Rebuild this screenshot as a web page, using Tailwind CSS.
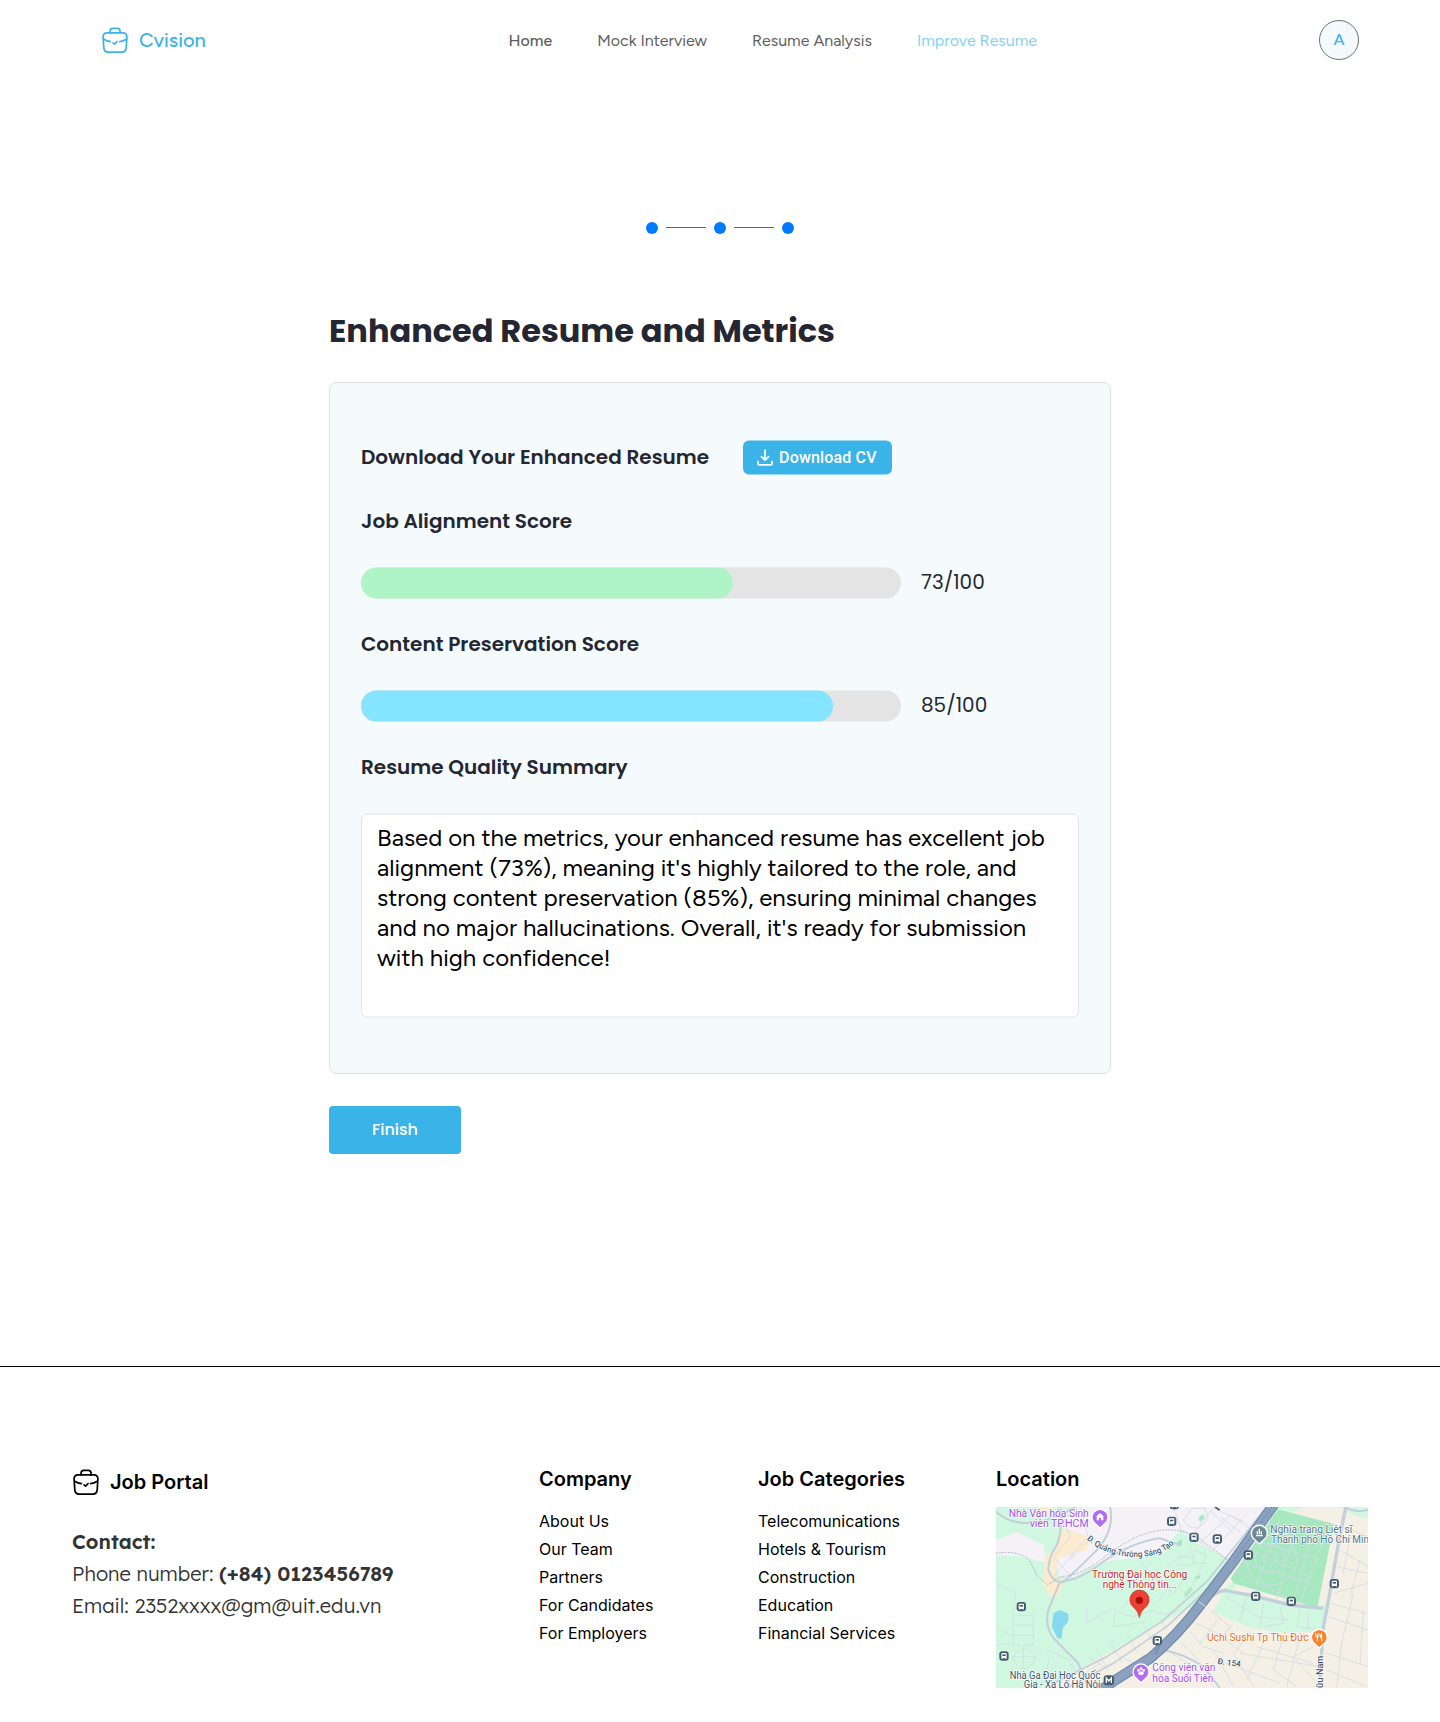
<!DOCTYPE html>
<html lang="en">
<head>
<meta charset="utf-8">
<title>Cvision - Improve Resume</title>
<script src="https://cdn.jsdelivr.net/npm/@tailwindcss/browser@4"></script>
</head>
<body class="bg-white font-['Inter',sans-serif] text-black">
<svg class="hidden">
  <symbol id="briefcase" viewBox="0 0 26 26">
    <g fill="none" stroke="currentColor" stroke-width="1.7" stroke-linecap="round" stroke-linejoin="round">
      <path d="M8 5.900V4.500C8 2.500 8.900 1.300 10.900 1.300h4.300c2 0 2.900 1.200 2.900 3.200v1.400"/>
      <path d="M5.200 5.900h15.600c2.900 0 4.300 1.700 4.100 4.400l-.7 10.300c-.2 3.100-1.300 4.600-4.500 4.600H6.300c-3.200 0-4.300-1.500-4.500-4.600L1.100 10.300C.9 7.600 2.300 5.900 5.200 5.900Z"/>
      <path d="M1.700 12.300c2.200 1.300 4.400 2.100 6.700 2.400M24.300 12.300c-2.200 1.300-4.400 2.100-6.700 2.400"/>
      <path d="m11 15.900 1.600 1.200 2.500-2.600"/>
    </g>
  </symbol>
</svg>

<header class="flex h-20 items-center pl-[102px] pr-[81px] font-['Figtree',sans-serif]">
  <a class="flex w-[406.500px] items-center gap-[11px] text-[#3ab3e8]">
    <svg class="size-[26px]"><use href="#briefcase"/></svg>
    <span class="text-xl font-medium leading-7">Cvision</span>
  </a>
  <nav class="flex gap-[45px] pt-0.5 text-base text-[#5f5f5f]">
    <a class="font-medium">Home</a>
    <a>Mock Interview</a>
    <a>Resume Analysis</a>
    <a class="text-[#84d2f3]">Improve Resume</a>
  </nav>
  <div class="ml-auto flex size-10 items-center justify-center rounded-full border border-[#6b7278] bg-[#f5fafd] text-base font-medium text-[#3ab3e8]">A</div>
</header>

<main class="mx-auto w-[782px]">
  <div class="mt-[142px] flex items-center justify-center gap-2">
    <span class="size-3 rounded-full bg-[#007bff]"></span>
    <span class="mb-px h-px w-10 bg-[#007bff]"></span>
    <span class="size-3 rounded-full bg-[#007bff]"></span>
    <span class="mb-px h-px w-10 bg-[#007bff]"></span>
    <span class="size-3 rounded-full bg-[#007bff]"></span>
  </div>

  <h1 class="mt-[73px] font-['Poppins',sans-serif] text-[32px] font-bold leading-[48px] text-[#242731]">Enhanced Resume and Metrics</h1>

  <section class="mt-[27px] rounded-lg border border-[#dfe3e6] bg-[#f5fafd] px-[31px] pb-[55px] pt-[58px] font-['Poppins',sans-serif] text-xl text-[#242731]">
    <div class="flex h-[34px] gap-[34px]">
      <h2 class="font-semibold leading-[32px]">Download Your Enhanced Resume</h2>
      <button class="flex h-[34px] w-[149px] -translate-y-[0.5px] items-center gap-1.5 rounded-md bg-[#3ab3e8] pl-3.5 font-['Roboto',sans-serif] text-base font-medium tracking-[0.01em] text-white">
        <svg class="h-[18px] w-4" viewBox="0 0 16 18" fill="none" stroke="white" stroke-width="1.7" stroke-linecap="round" stroke-linejoin="round"><path d="M8 1.500v10M4.400 8.200 8 11.700l3.600-3.500M1 12.900v2.400c0 .7.400 1.100 1.100 1.100h11.800c.7 0 1.100-.4 1.100-1.100v-2.400"/></svg>
        Download CV
      </button>
    </div>

    <h2 class="mt-[31px] font-semibold leading-[30px]">Job Alignment Score</h2>
    <div class="mt-8 flex h-[31px] items-center gap-5">
      <div class="h-[31px] w-[540px] -translate-y-[0.5px] rounded-2xl bg-[#e4e4e4]"><div class="h-full w-[372px] rounded-2xl bg-[#aff4c6]"></div></div>
      <span class="pb-1 leading-[30px]">73/100</span>
    </div>

    <h2 class="mt-[30px] font-semibold leading-[30px]">Content Preservation Score</h2>
    <div class="mt-8 flex h-[31px] items-center gap-5">
      <div class="h-[31px] w-[540px] -translate-y-[0.5px] rounded-2xl bg-[#e4e4e4]"><div class="h-full w-[472px] rounded-2xl bg-[#85e4ff]"></div></div>
      <span class="pb-1 leading-[30px]">85/100</span>
    </div>

    <h2 class="mt-[30px] font-semibold leading-[30px]">Resume Quality Summary</h2>
    <p class="mt-8 h-[204px] -translate-y-[0.5px] rounded-md border border-[#e4e4e4] bg-white px-[15px] pt-2 font-['Figtree',sans-serif] text-2xl leading-[30px] text-black">Based on the metrics, your enhanced resume has excellent job<br>alignment (73%), meaning it's highly tailored to the role, and<br>strong content preservation (85%), ensuring minimal changes<br>and no major hallucinations. Overall, it's ready for submission<br>with high confidence!</p>
  </section>

  <button class="mt-8 block h-12 w-[132px] rounded bg-[#3ab3e8] font-['Poppins',sans-serif] text-base font-medium text-white">Finish</button>
</main>

<footer class="mt-[212px] grid grid-cols-[467px_219px_238px_372px] border-t border-black pl-[72px] pt-[100px]">
  <div>
    <div class="flex items-center gap-3">
      <svg class="size-[26px] translate-x-px"><use href="#briefcase"/></svg>
      <span class="text-xl font-semibold leading-[30px]">Job Portal</span>
    </div>
    <div class="mt-[29px] font-['Lexend',sans-serif] text-xl font-light leading-8 text-[#333]">
      <p class="font-semibold">Contact:</p>
      <p>Phone number: <b class="font-semibold">(+84) 0123456789</b></p>
      <p>Email: 2352xxxx@gm@uit.edu.vn</p>
    </div>
  </div>
  <div>
    <h3 class="text-xl font-semibold leading-6">Company</h3>
    <ul class="mt-4 leading-7">
      <li>About Us</li><li>Our Team</li><li>Partners</li><li>For Candidates</li><li>For Employers</li>
    </ul>
  </div>
  <div>
    <h3 class="text-xl font-semibold leading-6">Job Categories</h3>
    <ul class="mt-4 leading-7">
      <li>Telecomunications</li><li>Hotels &amp; Tourism</li><li>Construction</li><li>Education</li><li>Financial Services</li>
    </ul>
  </div>
  <div>
    <h3 class="text-xl font-semibold leading-6">Location</h3>
    <svg class="mt-4 block h-[181px] w-[372px] font-['Roboto',sans-serif]" viewBox="48 171 1116 543" preserveAspectRatio="none">
      <defs>
        <g id="bus"><rect x="-14" y="-14" width="28" height="28" rx="9" fill="#455d73"/><rect x="-8" y="-9" width="16" height="16" rx="3" fill="#fff"/><rect x="-5" y="-5" width="10" height="5" fill="#455d73"/><path d="M-6 9v-3M6 9v-3" stroke="#fff" stroke-width="3"/></g>
        <path id="square" d="M320 268Q362 306 430 318Q535 332 588 276"/>
      </defs>
      <rect x="48" y="171" width="1116" height="543" fill="#f4f0e5"/>
      <!-- parks -->
      <path fill="#d0f7e0" d="M48 171H420L600 240 745 325 665 455 550 515 330 640 190 714H48Z"/>
      <path fill="#f4f2f6" d="M280 171H870L745 330 640 280 600 235 585 290 545 315 470 325 400 330 330 352 280 385 235 378 225 290Z"/>
      <path fill="#f4f2f6" d="M48 270 110 245 190 285 200 340 130 320 48 315Z"/>
      <path fill="#d0f7e0" d="M590 250 745 325 700 395 560 350 480 330 550 310Z"/>
      <path fill="#fbebcf" d="M250 235 330 260 320 300 240 320 225 375 250 400 235 440 210 440 190 400 195 320 225 290Z"/>
      <path fill="#fbebcf" d="M170 171H215L195 205 165 200Z"/>
      <path fill="#d0f7e0" d="M895 171H975L890 205 760 395 735 415 700 485 800 530 900 548 1030 545 1040 455 1012 475 760 420Z"/>
      <path fill="#a6e8c0" d="M893 178 1062 222 1012 474 760 400 752 385Z"/>
      <path fill="#d0f7e0" d="M1075 171h89v35l-40-10Z"/>
      <path fill="#a6e8c0" d="M655 203 668 193 675 205 660 216ZM592 275l14-8v18l-12 5ZM612 432l20-22 6 8-20 24ZM645 380l15-6v10l-15 6Z"/>
      <path fill="#85d8ee" d="M240 480 266 492 264 515 248 535 245 566 232 564 216 530 220 490Z"/>
      <!-- minor streets -->
      <g fill="none" stroke="#d3dce5" stroke-width="2.500">
        <path d="M100 496h60v90h-60ZM100 526h60M100 556h60M130 586v70M98 620q35-45 70 0q-8 30-35 38q-27-8-35-38ZM98 620h70"/>
        <path d="M320 475v45l50-30 35-15 15 15 40 10 60-20 30 15 40-10M405 490l-5 40 100-15M425 480l15-25 40-20M480 335l40 40-40 40M520 375l60 55 30-40M560 350l80-50 40 15-30 70-40 60M560 420l-30 40M590 320h50v20h40M590 345h50v-35"/>
        <path d="M580 171l25 70 55 35 40 30M690 180l70 70M640 250l60-75 90 40M660 280l90-85 60 40M700 300l100-110M720 200l60 45M610 210l25-35h40l10 30-30 30-30-5Z"/>
        <path d="M240 171l30 90-50 60 65 70M300 171l25 90-60 60M330 270l-60 60M290 300l-70 80"/>
        <path d="M815 270l210 60M800 295l200 90M785 335l220 70M770 365l190 100M850 230l180 60M900 205l-70 200M950 220l-60 230M1000 230l-60 230M1040 240l-80 220"/>
        <circle cx="870" cy="325" r="22"/><circle cx="870" cy="325" r="45"/><circle cx="875" cy="330" r="75"/>
        <path d="M800 440l-20 70M850 460l-10 70M900 470l10 50-60 10M960 480l-10 50 80 10M735 440l100 60 90 10M985 490v50"/>
        <path d="M1090 230l74 30M1080 300l84 50M1070 350l94 20M1060 430l104-30M1050 460l110 30M1045 500l119 40M1110 260l-20 110M1140 330l-30 110M1120 430l-40 170M1150 480l-10 160M1040 610l124 40M1040 660l120 50M1085 580l-15 130"/>
        <path d="M690 480l60 50-30 40M650 520l60 30 80 60M630 545l40 45 60 20M600 575l60 60M560 600l80 50 60 60M720 500l-60 80M760 520l-50 60M810 550l-50 60 60 100M860 560l-60 130M910 560l-30 100 70 50M960 560l-40 150M1000 590l-60 30 70 80M780 610l240 40M740 640l160 60M830 590l170 50M700 600l60 110"/>
        <path d="M300 680l60-40M350 600l35 60M390 575l35 60M440 550l30 55M490 525l30 50M540 505l20 35M270 640l40 50M420 620l60 25M330 625l50 30"/>
        <path d="M48 400l60 30-10 60M130 714l40-40M180 714l30-90M48 530l50 30M48 585l50-5M200 600l70 30"/>
      </g>
      <!-- larger streets -->
      <g fill="none" stroke="#c3cfda" stroke-width="6">
        <path d="M48 185q70 60 180 15l60-29"/>
        <path d="M390 171q15 70-40 130-50 50-100 95-30 5-45-35 0-40 25-75 20-50 10-115"/>
        <path d="M240 395q60-5 130-60 90-60 170-70l60 20M240 395l-35 85q-15 60 30 100l60 60 30 74"/>
        <path d="M890 171L700 400 560 530 400 640 260 714M860 171L680 395 545 515 380 620 220 700" stroke-width="5"/>
        <path d="M730 420q40 10 80 15l120 30 100 10M680 455q20-30 60-35" stroke-width="10"/>
        <path d="M1098 171q-20 90-35 180-15 90-33 180l-12 183" stroke-width="10"/>
        <path d="M1164 180q-40 10-70-9M550 600q60 10 120 50l50 64"/>
      </g>
      <path fill="none" stroke="#8b9299" stroke-width="2" stroke-dasharray="5 4" d="M48 310q70-10 100 20l25 50 30 24 40-24q60-5 120-50 90-75 170-88 70-10 120 20l90 68"/>
      <!-- highway -->
      <path fill="none" stroke="#7189ab" stroke-width="32" d="M884 160L760 335 665 460Q590 560 510 625L400 694 350 730"/>
      <path fill="none" stroke="#8ba1c0" stroke-width="25" d="M884 160L760 335 665 460Q590 560 510 625L400 694 350 730"/>
      <path fill="none" stroke="#637a9c" stroke-width="2" stroke-dasharray="7 4" d="M884 160L760 335"/>
      <path stroke="#7c94b5" stroke-width="13" d="M535 585l-8 28"/>
      <path stroke="#dce4ec" stroke-width="3" d="M657 455l20 15"/>
      <!-- stops -->
      <use href="#bus" x="575" y="214"/><use href="#bus" x="583" y="164"/><use href="#bus" x="642" y="262"/><use href="#bus" x="712" y="267"/><use href="#bus" x="805" y="315"/><use href="#bus" x="1063" y="401"/><use href="#bus" x="827" y="439"/><use href="#bus" x="934" y="454"/><use href="#bus" x="124" y="470"/><use href="#bus" x="532" y="572"/><use href="#bus" x="72" y="618"/>
      <path d="M705 171l14 9" stroke="#455d73" stroke-width="5"/>
      <!-- place markers -->
      <g stroke="#fff" stroke-width="4">
        <path fill="#b36bf2" d="M360 234l-13-12a24 24 0 1 1 26 0Z"/>
        <path fill="#6d8a94" d="M838 282l-13-12a24 24 0 1 1 26 0Z"/>
        <path fill="#b36bf2" d="M483 698l-13-12a24 24 0 1 1 26 0Z"/>
        <path fill="#f8842c" d="M1018 594l-13-12a24 24 0 1 1 26 0Z"/>
      </g>
      <path fill="#fff" d="M350 211v-14l10-8 10 8v14h-7v-7h-6v7ZM828 259v-5h20v5ZM830 252v-8h4v8ZM836 252v-16h4v16ZM842 252v-8h4v8Z"/>
      <g fill="#fff"><circle cx="475" cy="661" r="4"/><circle cx="483" cy="656" r="4"/><circle cx="491" cy="661" r="4"/><ellipse cx="483" cy="670" rx="8" ry="6"/></g>
      <path fill="none" stroke="#fff" stroke-width="3" d="M1012 574v-24M1007 550v7q0 4 5 4t5-4v-7M1025 574v-24q-4 3-4 12h4"/>
      <rect x="371" y="676" width="31" height="30" rx="9" fill="#455d73"/><path d="M379 699v-15l7.500 9 7.500-9v15" fill="none" stroke="#fff" stroke-width="4"/>
      <path fill="#ea4335" stroke="#c5221f" stroke-width="1.500" d="M478 503q-4-20-16-30a29 29 0 1 1 33 0q-13 10-17 30Z"/><circle cx="478" cy="451" r="11" fill="#a50e0e"/>
      <!-- labels -->
      <g font-size="30" stroke="#fff" stroke-width="4" stroke-linejoin="round" paint-order="stroke" lengthAdjust="spacingAndGlyphs">
        <g fill="#a050ec" text-anchor="end"><text x="326" y="200" textLength="240" lengthAdjust="spacingAndGlyphs">Nhà Văn hóa Sinh</text><text x="326" y="231" textLength="177" lengthAdjust="spacingAndGlyphs">viên TP.HCM</text></g>
        <g fill="#a050ec"><text x="517" y="664" textLength="189" lengthAdjust="spacingAndGlyphs">Công viên văn</text><text x="517" y="695" textLength="183" lengthAdjust="spacingAndGlyphs">hóa Suối Tiên</text></g>
        <g fill="#c81f30" text-anchor="middle"><text x="479" y="383" textLength="286" lengthAdjust="spacingAndGlyphs">Trường Đại học Công</text><text x="479" y="413" textLength="222" lengthAdjust="spacingAndGlyphs">nghệ Thông tin...</text></g>
        <g fill="#567480"><text x="871" y="248" textLength="246" lengthAdjust="spacingAndGlyphs">Nghĩa trang Liệt sĩ</text><text x="873" y="278" textLength="310" lengthAdjust="spacingAndGlyphs">Thành phố Hồ Chí Minh</text></g>
        <text x="681" y="574" textLength="305" lengthAdjust="spacingAndGlyphs" fill="#e8701a">Uchi Sushi Tp Thủ Đức</text>
        <g fill="#3d556b" text-anchor="end"><text x="361" y="687" textLength="272" lengthAdjust="spacingAndGlyphs">Nhà Ga Đại Học Quốc</text><text x="361" y="713" textLength="230" lengthAdjust="spacingAndGlyphs">Gia - Xa Lộ Hà Nội</text></g>
        <g fill="#3d556b" font-size="25" font-weight="500"><text><textPath href="#square" textLength="285" lengthAdjust="spacingAndGlyphs">Đ. Quảng Trường Sáng Tạo</textPath></text><text transform="translate(712 642) rotate(7)" textLength="70">Đ. 154</text><text transform="translate(1029 714) rotate(-90)" textLength="97" lengthAdjust="spacingAndGlyphs">ữu Nam</text></g>
      </g>
    </svg>
  </div>
</footer>
</body>
</html>
